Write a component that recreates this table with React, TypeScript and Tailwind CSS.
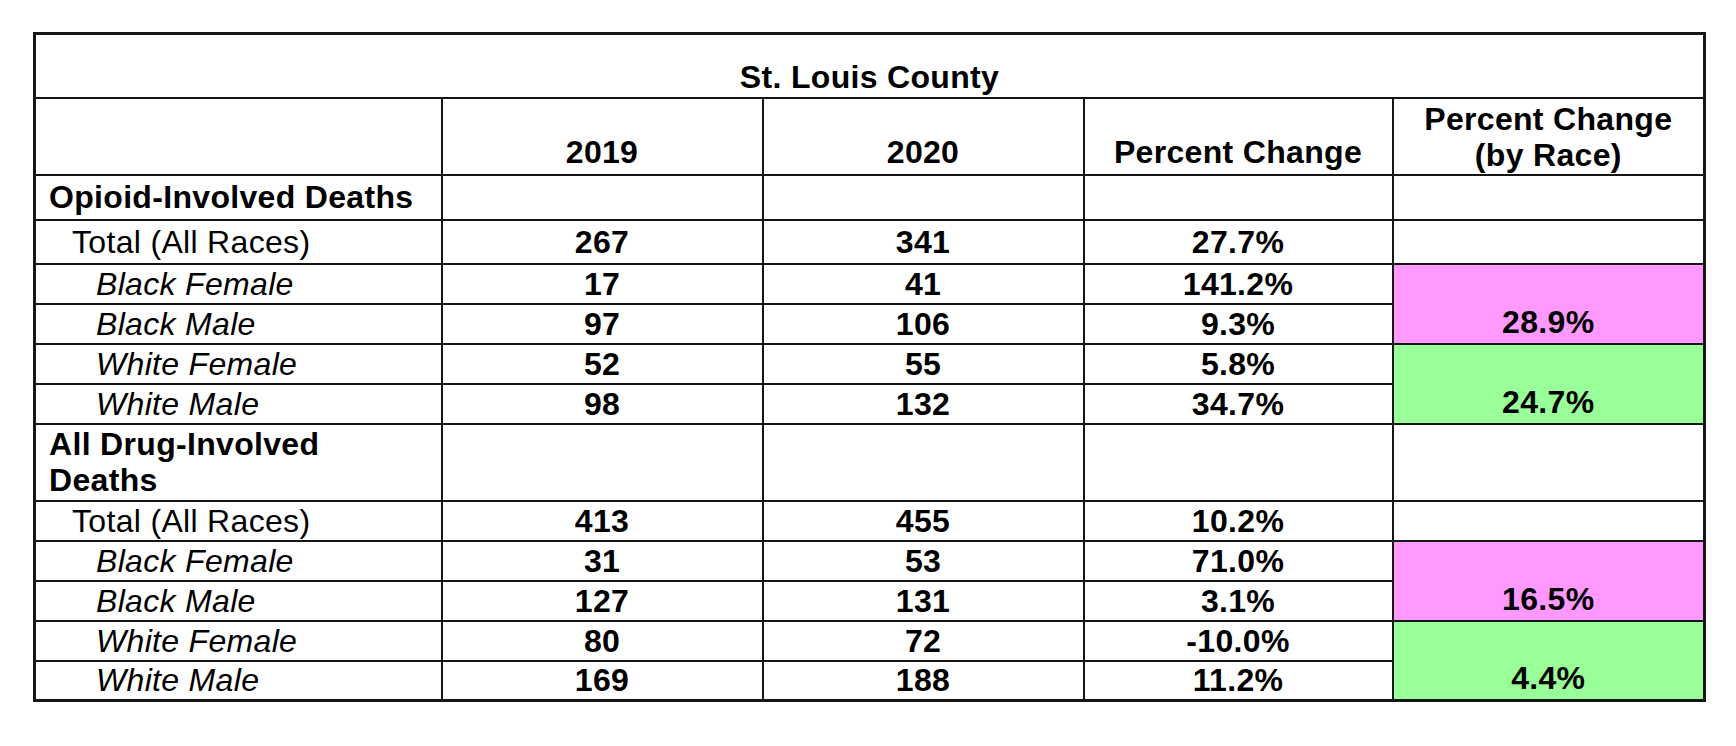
import React from 'react';

type Row = {
  label: string;
  kind: 'total' | 'race';
  y2019: string;
  y2020: string;
  change: string;
  h: string;
};

type Block = {
  title: string[];
  titleH: string;
  total: Row;
  black: [Row, Row];
  white: [Row, Row];
  blackChange: string;
  whiteChange: string;
};

const blocks: Block[] = [
  {
    title: ['Opioid-Involved Deaths'],
    titleH: 'h-[45px]',
    total: { label: 'Total (All Races)', kind: 'total', y2019: '267', y2020: '341', change: '27.7%', h: 'h-[44px]' },
    black: [
      { label: 'Black Female', kind: 'race', y2019: '17', y2020: '41', change: '141.2%', h: 'h-[40px]' },
      { label: 'Black Male', kind: 'race', y2019: '97', y2020: '106', change: '9.3%', h: 'h-[40px]' },
    ],
    white: [
      { label: 'White Female', kind: 'race', y2019: '52', y2020: '55', change: '5.8%', h: 'h-[40px]' },
      { label: 'White Male', kind: 'race', y2019: '98', y2020: '132', change: '34.7%', h: 'h-[40px]' },
    ],
    blackChange: '28.9%',
    whiteChange: '24.7%',
  },
  {
    title: ['All Drug-Involved', 'Deaths'],
    titleH: 'h-[77px]',
    total: { label: 'Total (All Races)', kind: 'total', y2019: '413', y2020: '455', change: '10.2%', h: 'h-[40px]' },
    black: [
      { label: 'Black Female', kind: 'race', y2019: '31', y2020: '53', change: '71.0%', h: 'h-[40px]' },
      { label: 'Black Male', kind: 'race', y2019: '127', y2020: '131', change: '3.1%', h: 'h-[40px]' },
    ],
    white: [
      { label: 'White Female', kind: 'race', y2019: '80', y2020: '72', change: '-10.0%', h: 'h-[40px]' },
      { label: 'White Male', kind: 'race', y2019: '169', y2020: '188', change: '11.2%', h: 'h-[40px]' },
    ],
    blackChange: '16.5%',
    whiteChange: '4.4%',
  },
];

const cell = 'border-2 border-[#161616] p-0';
const num = 'text-center font-bold leading-none';

function DataRow({ row, merged }: { row: Row; merged?: React.ReactNode }) {
  return (
    <tr className={row.h}>
      <td
        className={`${cell} leading-none ${
          row.kind === 'total' ? 'pl-[36px]' : 'pl-[60px] italic'
        }`}
      >
        {row.label}
      </td>
      <td className={`${cell} ${num}`}>{row.y2019}</td>
      <td className={`${cell} ${num}`}>{row.y2020}</td>
      <td className={`${cell} ${num}`}>{row.change}</td>
      {merged}
    </tr>
  );
}

function ByRaceCell({ value, color }: { value: string; color: string }) {
  return (
    <td rowSpan={2} className={`${cell} ${color} ${num} align-bottom pb-[5px]`}>
      {value}
    </td>
  );
}

export default function App() {
  return (
    <div className="min-h-[746px] w-[1736px] bg-white pl-[33px] pt-[32px] font-['Liberation_Sans',Arial,sans-serif] text-[32px] tracking-[0.01em] text-black">
      <table className="w-[1670px] table-fixed border-collapse border-[3px] border-[#161616]">
        <colgroup>
          <col className="w-[407px]" />
          <col className="w-[321px]" />
          <col className="w-[321px]" />
          <col className="w-[309px]" />
          <col className="w-[312px]" />
        </colgroup>
        <tbody>
          {/* Title */}
          <tr className="h-[64px]">
            <td colSpan={5} className={`${cell} ${num} align-bottom pb-[4px]`}>
              St. Louis County
            </td>
          </tr>

          {/* Column headers */}
          <tr className="h-[77px]">
            <td className={cell} />
            <td className={`${cell} ${num} align-bottom pb-[6px]`}>2019</td>
            <td className={`${cell} ${num} align-bottom pb-[6px]`}>2020</td>
            <td className={`${cell} ${num} align-bottom pb-[6px]`}>Percent Change</td>
            <td className={`${cell} text-center font-bold leading-[36px] align-bottom pb-[1px]`}>
              Percent Change
              <br />
              (by Race)
            </td>
          </tr>

          {blocks.map((b) => (
            <React.Fragment key={b.title.join(' ')}>
              <tr className={b.titleH}>
                <td className={`${cell} pl-[13px] font-bold leading-[36px]`}>
                  {b.title.map((t) => (
                    <div key={t}>{t}</div>
                  ))}
                </td>
                <td className={cell} />
                <td className={cell} />
                <td className={cell} />
                <td className={cell} />
              </tr>
              <DataRow row={b.total} merged={<td className={cell} />} />
              <DataRow
                row={b.black[0]}
                merged={<ByRaceCell value={b.blackChange} color="bg-[#ff99ff]" />}
              />
              <DataRow row={b.black[1]} />
              <DataRow
                row={b.white[0]}
                merged={<ByRaceCell value={b.whiteChange} color="bg-[#99ff99]" />}
              />
              <DataRow row={b.white[1]} />
            </React.Fragment>
          ))}
        </tbody>
      </table>
    </div>
  );
}
